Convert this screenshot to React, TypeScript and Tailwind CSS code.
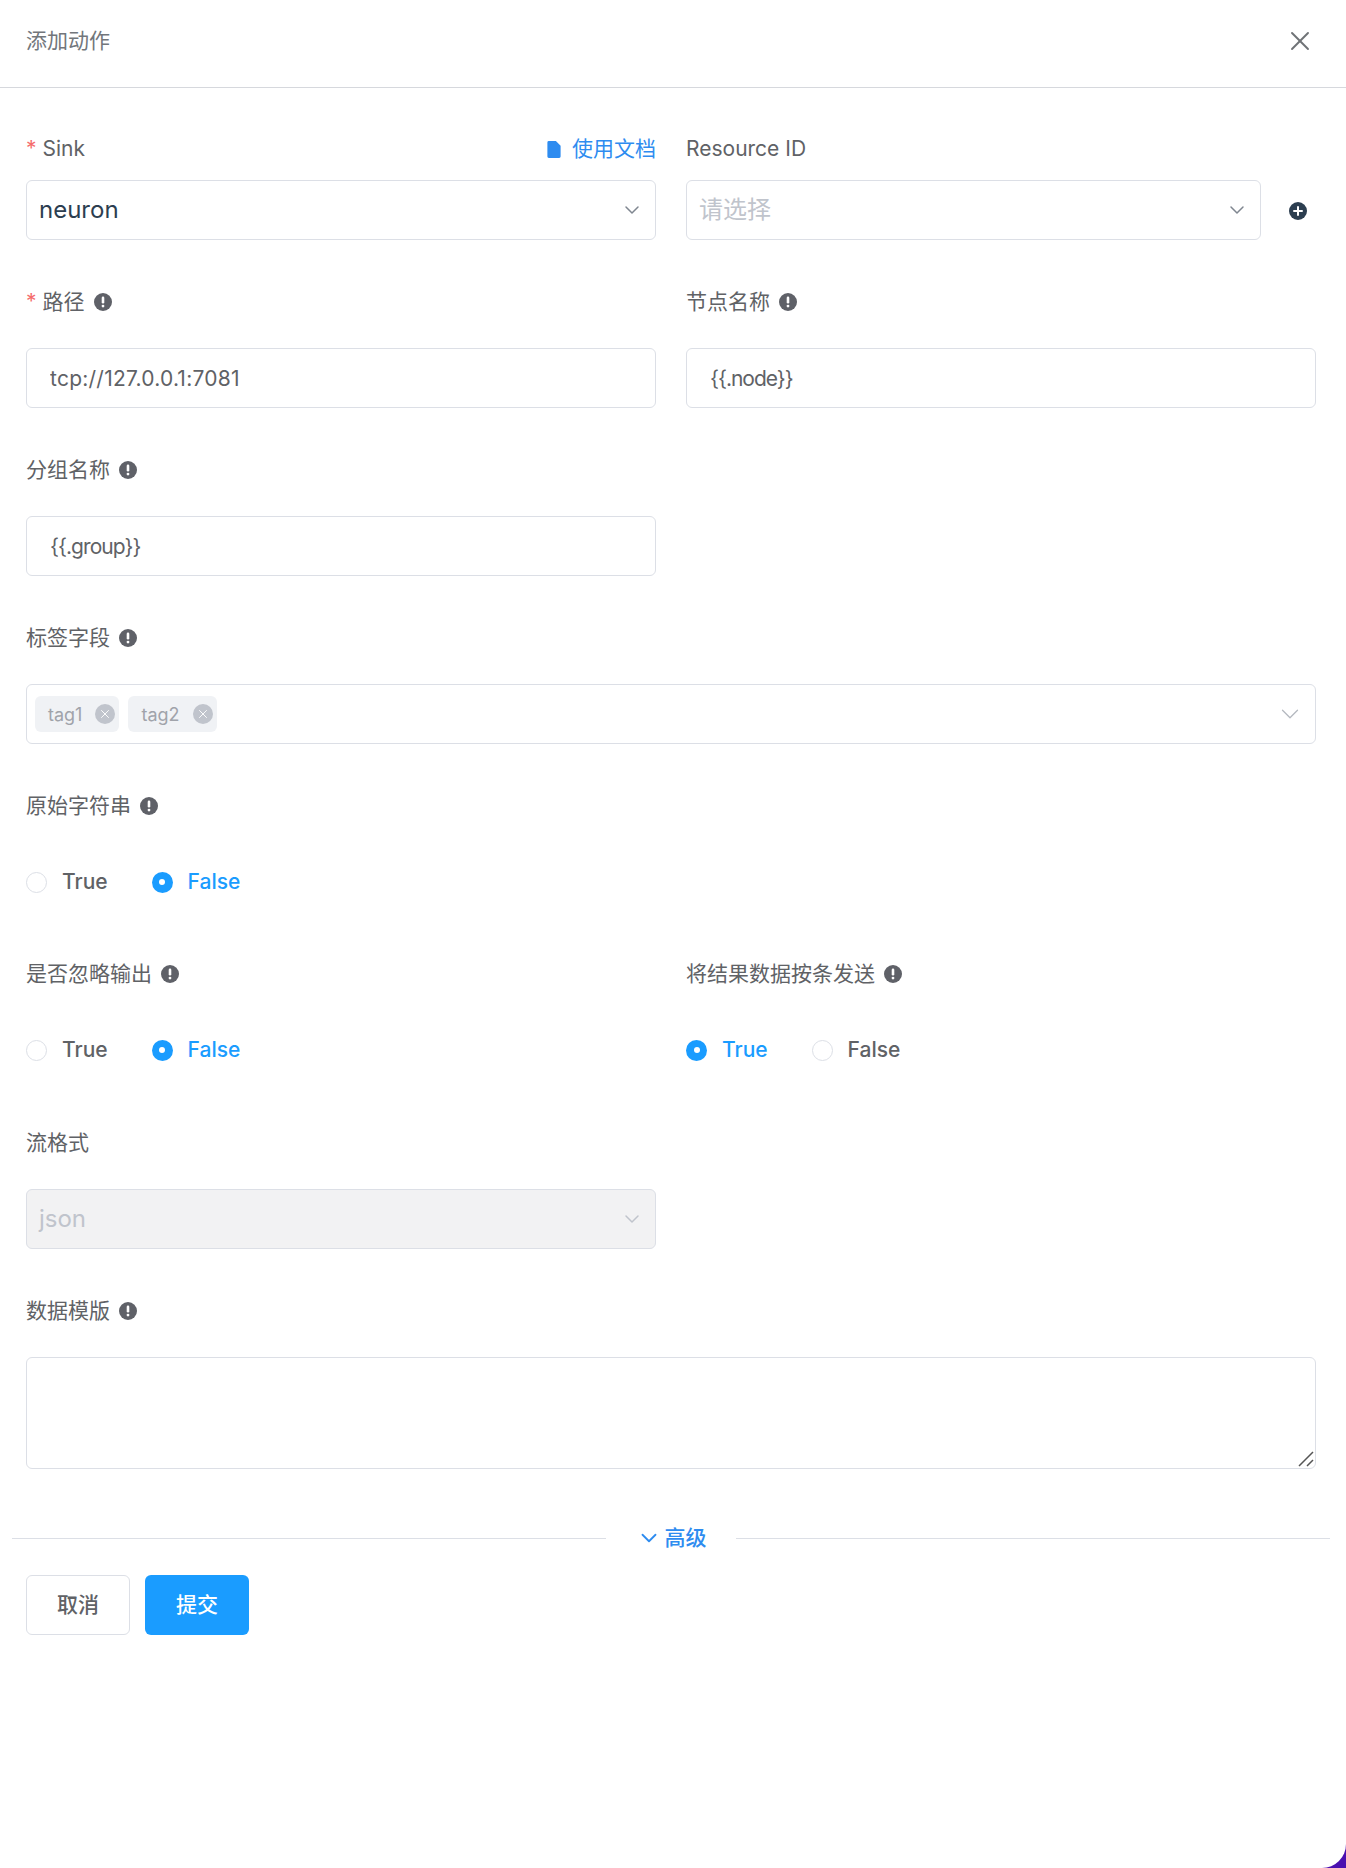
import { ChevronDown, X } from "lucide-react";
import type { ReactNode } from "react";

const fontStack = "font-['Inter','Noto_Sans_CJK_SC',sans-serif]";

function InfoIcon() {
  return (
    <svg viewBox="0 0 18 18" className="h-[18px] w-[18px] shrink-0">
      <circle cx="9" cy="9" r="9" fill="#5f6168" />
      <rect x="7.7" y="3.6" width="2.6" height="7" rx="1.3" fill="#fff" />
      <circle cx="9" cy="13.1" r="1.4" fill="#fff" />
    </svg>
  );
}

function FieldLabel({ text, required, info }: { text: string; required?: boolean; info?: boolean }) {
  return (
    <div className="flex h-8 items-center text-[21px] leading-8 text-[#606266]">
      {required && <span className="mr-[6px] text-[#f56c6c]">*</span>}
      <span>{text}</span>
      {info && (
        <span className="ml-[9px]">
          <InfoIcon />
        </span>
      )}
    </div>
  );
}

function TextInput({ value, className }: { value: string; className?: string }) {
  return (
    <input
      readOnly
      value={value}
      className={`mt-[30px] block h-[60px] w-full rounded-[6px] border border-[#dcdfe6] bg-white px-[23px] text-[21px] text-[#606266] outline-none ${className ?? ""}`}
    />
  );
}

function SelectBox({ children, disabled, className }: { children: ReactNode; disabled?: boolean; className?: string }) {
  return (
    <div
      className={`flex h-[60px] items-center justify-between rounded-[6px] border border-[#dcdfe6] pl-[12px] pr-[11px] text-[24px] ${
        disabled ? "bg-[#f2f2f3] text-[#c0c4cc]" : "bg-white"
      } ${className ?? ""}`}
    >
      <span>{children}</span>
      <ChevronDown size={24} strokeWidth={1.5} className={disabled ? "text-[#c0c4cc]" : "text-[#7f8690]"} />
    </div>
  );
}

function Radio({ label, checked }: { label: string; checked?: boolean }) {
  return (
    <div className="flex items-center">
      {checked ? (
        <span className="flex h-[21px] w-[21px] items-center justify-center rounded-full bg-[#1a9cff]">
          <span className="h-[6px] w-[6px] rounded-full bg-white" />
        </span>
      ) : (
        <span className="h-[21px] w-[21px] rounded-full border border-[#dcdfe6] bg-white" />
      )}
      <span className={`ml-[15px] text-[21px] font-medium ${checked ? "text-[#1a9cff]" : "text-[#606266]"}`}>{label}</span>
    </div>
  );
}

function RadioGroup({ first, second }: { first?: boolean; second?: boolean }) {
  return (
    <div className="mt-[30px] flex h-[60px] items-center gap-[44px]">
      <Radio label="True" checked={first} />
      <Radio label="False" checked={second} />
    </div>
  );
}

function Tag({ label }: { label: string }) {
  return (
    <span className="flex h-[36px] items-center rounded-[6px] bg-[#f0f2f5] pl-[13px] pr-[4px] text-[18px] text-[#a0a3aa]">
      {label}
      <span className="ml-[13px] flex h-[20px] w-[20px] items-center justify-center rounded-full bg-[#c0c4cc] text-white">
        <X size={14} strokeWidth={1.6} />
      </span>
    </span>
  );
}

export default function App() {
  return (
    <div className={`h-[1868px] w-full bg-[#4a10b0] ${fontStack}`}>
      <div className="h-full w-full rounded-br-[24px] bg-white">
        <header className="flex h-[88px] items-center justify-between border-b border-[#d6d8dd] pb-[6px] pl-[26px] pr-[30px]">
          <span className="text-[21px] text-[#72767b]">添加动作</span>
          <X size={32} strokeWidth={1.4} className="text-[#6f7276]" />
        </header>

        <div className="pl-[26px] pr-[30px] pt-[45px]">
          <div className="grid grid-cols-2 gap-x-[30px]">
            <div>
              <div className="flex items-center justify-between">
                <FieldLabel text="Sink" required />
                <span className="flex items-center text-[21px] text-[#2e8cf0]">
                  <svg viewBox="0 0 14 18" className="mr-[11px] h-[17px] w-[14px]" fill="#2e8cf0">
                    <path d="M1.5 0H9l5 5v11.5a1.5 1.5 0 0 1-1.5 1.5h-11A1.5 1.5 0 0 1 0 16.5v-15A1.5 1.5 0 0 1 1.5 0z" />
                  </svg>
                  使用文档
                </span>
              </div>
              <SelectBox className="mt-[15px] text-[#2c3e50]">neuron</SelectBox>
            </div>
            <div>
              <FieldLabel text="Resource ID" />
              <div className="mt-[15px] flex items-center">
                <SelectBox className="w-[575px] text-[#c0c4cc]">请选择</SelectBox>
                <svg viewBox="0 0 18 18" className="ml-[28px] mt-[1px] h-[18px] w-[18px]">
                  <circle cx="9" cy="9" r="9" fill="#2c3e50" />
                  <path d="M9 5v8M5 9h8" stroke="#fff" strokeWidth="2" strokeLinecap="round" />
                </svg>
              </div>
            </div>
          </div>

          <div className="mt-[46px] grid grid-cols-2 gap-x-[30px]">
            <div>
              <FieldLabel text="路径" required info />
              <TextInput value="tcp://127.0.0.1:7081" className="tracking-[0.24px]" />
            </div>
            <div>
              <FieldLabel text="节点名称" info />
              <TextInput value="{{.node}}" className="tracking-[-1px]" />
            </div>
          </div>

          <div className="mt-[46px] grid grid-cols-2 gap-x-[30px]">
            <div>
              <FieldLabel text="分组名称" info />
              <TextInput value="{{.group}}" className="tracking-[-0.95px]" />
            </div>
          </div>

          <div className="mt-[46px]">
            <FieldLabel text="标签字段" info />
            <div className="mt-[30px] flex h-[60px] items-center justify-between rounded-[6px] border border-[#dcdfe6] pl-[8px] pr-[10px]">
              <div className="flex gap-[9px]">
                <Tag label="tag1" />
                <Tag label="tag2" />
              </div>
              <ChevronDown size={30} strokeWidth={1} className="text-[#b4b8bf]" />
            </div>
          </div>

          <div className="mt-[46px]">
            <FieldLabel text="原始字符串" info />
            <RadioGroup second />
          </div>

          <div className="mt-[46px] grid grid-cols-2 gap-x-[30px]">
            <div>
              <FieldLabel text="是否忽略输出" info />
              <RadioGroup second />
            </div>
            <div>
              <FieldLabel text="将结果数据按条发送" info />
              <RadioGroup first />
            </div>
          </div>

          <div className="mt-[47px] grid grid-cols-2 gap-x-[30px]">
            <div>
              <FieldLabel text="流格式" />
              <SelectBox disabled className="mt-[30px]">json</SelectBox>
            </div>
          </div>

          <div className="mt-[46px]">
            <FieldLabel text="数据模版" info />
            <div className="relative mt-[30px]">
              <textarea readOnly className="block h-[112px] w-full resize-none rounded-[6px] border border-[#dcdfe6] outline-none" />
              <svg viewBox="0 0 16 16" className="absolute bottom-[2px] right-[2px] h-4 w-4" stroke="#555" strokeWidth="1.5" fill="none">
                <path d="M1 15 15 1M9 15l6-6" />
              </svg>
            </div>
          </div>
        </div>

        <div className="mt-[53px] flex items-center pl-[12px] pr-[16px]">
          <div className="h-px flex-1 bg-[#dcdfe6]" />
          <span className="flex h-8 w-[130px] items-center justify-center text-[21px] font-medium text-[#2e8cf0]">
            <ChevronDown size={26} strokeWidth={1.7} className="mr-[3px]" />
            高级
          </span>
          <div className="h-px flex-1 bg-[#dcdfe6]" />
        </div>

        <div className="mt-[21px] flex gap-[15px] px-[26px]">
          <button className="h-[60px] w-[104px] rounded-[6px] border border-[#dcdfe6] bg-white text-[21px] font-medium text-[#606266]">取消</button>
          <button className="h-[60px] w-[104px] rounded-[6px] bg-[#1a9cff] text-[21px] font-medium text-white">提交</button>
        </div>
      </div>
    </div>
  );
}
